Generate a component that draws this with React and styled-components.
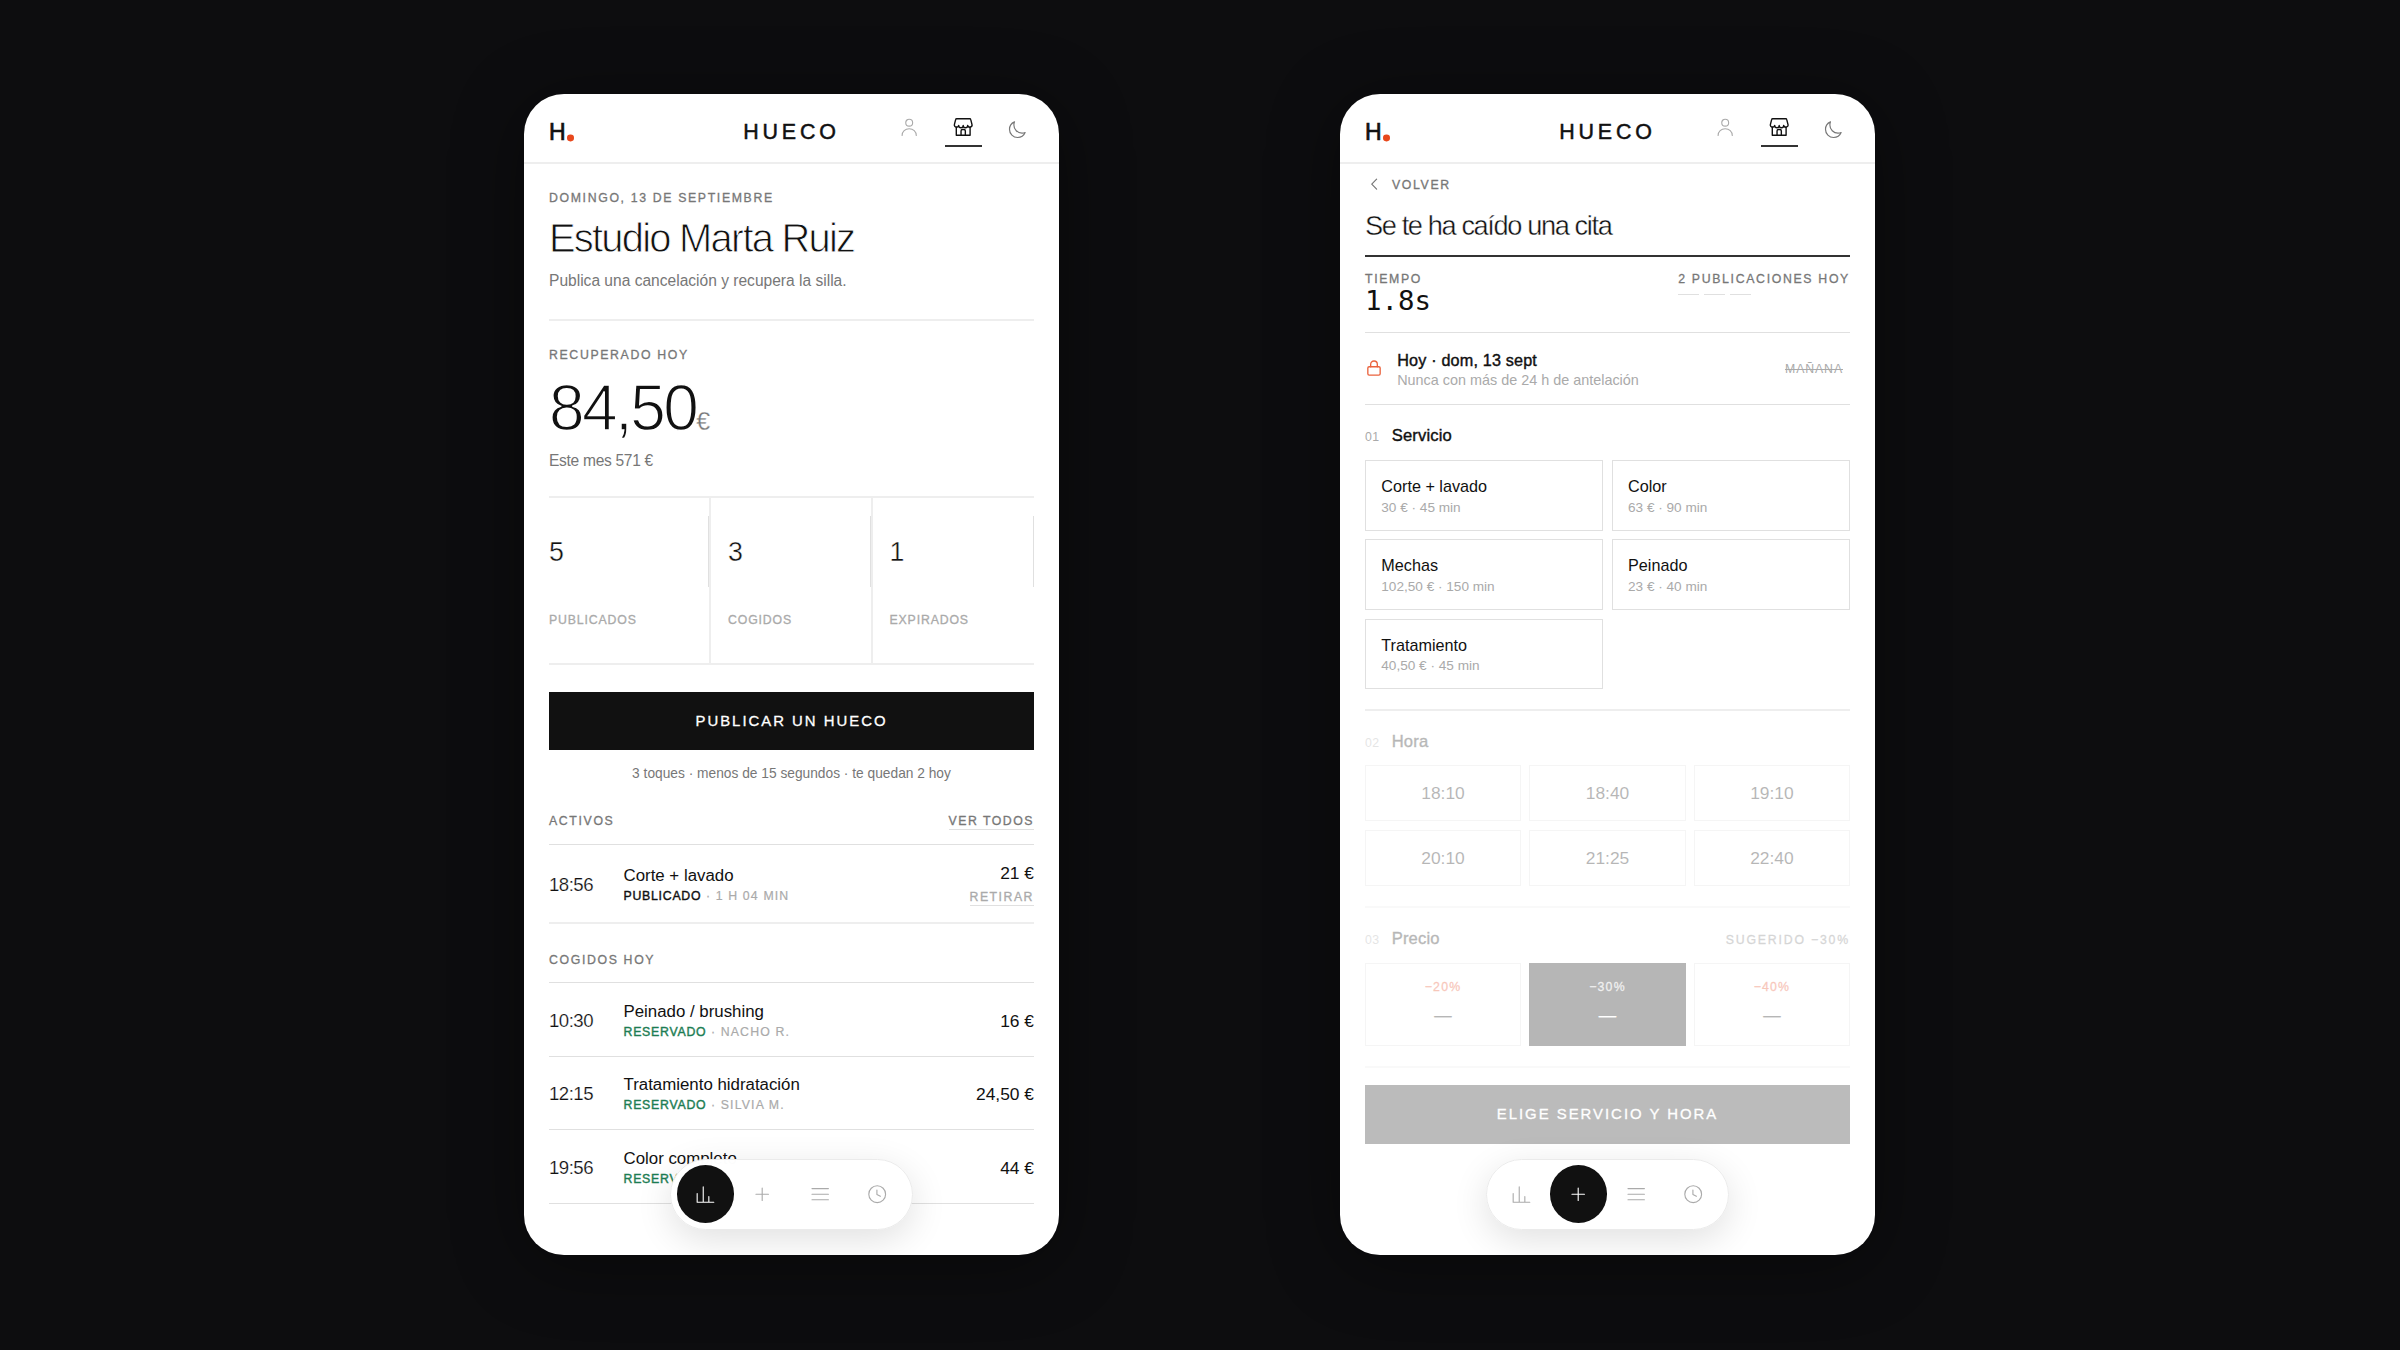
import React from "react";
import styled, { createGlobalStyle, css } from "styled-components";

const ink = "#111111";
const mid = "#777777";
const soft = "#aaaaaa";
const hair = "#e0e0e0";
const line = "#eeeeee";
const accent = "#e8481c";

const GlobalStyle = createGlobalStyle`
  * { box-sizing: border-box; }
  body {
    margin: 0;
    background: #0d0d0f;
    font-family: "Liberation Sans", Arial, sans-serif;
    color: ${ink};
  }
  button { font-family: inherit; }
`;

// the family has no 300 or 500 cut, a stroke trims or thickens the regular one
const light = css`
  -webkit-text-stroke: ${(p) => p.$trim || 0.4}px #fff;
`;
const medium = css`
  -webkit-text-stroke: 0.3px currentColor;
`;

const Stage = styled.main`
  display: flex;
  gap: 281px;
  height: 1350px;
  padding: 94px 0 0 524px;
  overflow: hidden;
`;

const Phone = styled.section`
  position: relative;
  width: 535px;
  height: 1161px;
  flex: none;
  overflow: hidden;
  border-radius: 40px;
  background: #fff;
`;

const Shade = styled.div`
  height: 1161px;
  border-radius: 40px;
  box-shadow: 0 10px 70px rgba(0, 0, 0, 0.4);
`;

const Header = styled.header`
  display: grid;
  grid-template-columns: 1fr auto 1fr;
  align-items: center;
  height: 70px;
  padding: 7px 25px 0;
  border-bottom: 2px solid ${line};
`;

const Logo = styled.div`
  display: flex;
  align-items: baseline;
  font-size: 23px;
  line-height: 26px;
  letter-spacing: 0;
  -webkit-text-stroke: 0.7px currentColor;
`;

const Dot = styled.i`
  width: 6.6px;
  height: 6.6px;
  margin-left: 1.5px;
  border-radius: 50%;
  background: ${accent};
  transform: translateY(1.4px);
`;

const Wordmark = styled.div`
  font-size: 21.4px;
  line-height: 26px;
  letter-spacing: 3.9px;
  -webkit-text-stroke: 0.5px currentColor;
`;

const Tabs = styled.nav`
  display: flex;
  justify-content: flex-end;
  align-items: center;
`;

const Tab = styled.div`
  display: flex;
  flex-direction: column;
  align-items: center;
  width: 37.5px;
  height: 31px;
  margin-right: 17px;
  color: ${(p) => (p.$active ? ink : soft)};
  border-bottom: 2px solid ${(p) => (p.$active ? "#333" : "transparent")};
`;

const Theme = styled.div`
  display: flex;
  justify-content: center;
  width: 35px;
  height: 23px;
  color: ${mid};
`;

const Svg = styled.svg`
  display: block;
  width: 22.4px;
  height: 22.4px;
  flex: none;
  fill: none;
  stroke: currentColor;
  stroke-width: ${(p) => p.$w || 1.2};
  stroke-linecap: round;
  stroke-linejoin: round;

  ${Theme} & { width: 20px; height: 20px; }
`;

const Body = styled.div`
  padding: ${(p) => p.$top}px 25px 0;
`;

const Eyebrow = styled.div`
  font-size: 12.3px;
  line-height: 16px;
  letter-spacing: ${(p) => p.$ls || 1.64}px;
  color: ${(p) => p.$color || mid};
  white-space: nowrap;
  ${medium}
`;

const Title = styled.h1`
  margin: 10px 0 0;
  font-size: 39.9px;
  font-weight: 400;
  line-height: 44px;
  letter-spacing: -1.76px;
  ${light}
`;

const Note = styled.p`
  height: 22px;
  margin: 10.3px 0 0;
  font-size: 15.57px;
  line-height: 22px;
  letter-spacing: ${(p) => p.$ls || 0}px;
  color: ${mid};
`;

const Rule = styled.hr`
  height: 2px;
  margin: 26.7px 0 26px;
  border: 0;
  background: ${line};
`;

const Amount = styled.div`
  height: 64px;
  margin-top: 13.2px;
  font-size: 64px;
  line-height: 64px;
  letter-spacing: -2.6px;
  white-space: nowrap;
  ${light}

  small {
    font-size: 25px;
    line-height: 25px;
    letter-spacing: 0;
    color: ${mid};
    -webkit-text-stroke: 0.3px #fff;
  }
`;

const Stats = styled.div`
  display: grid;
  grid-template-columns: 162px 161.5px 161.5px;
  height: 169px;
  margin-top: 23.5px;
  border-top: 2px solid ${line};
  border-bottom: 2px solid ${line};
`;

const Stat = styled.div`
  padding: 18px 0 0 17px;
  border-right: 2px solid ${line};

  &:first-child { padding-left: 0; }
  &:last-child { border-right: 0; }
`;

const StatValue = styled.div`
  height: 71.5px;
  margin-bottom: 24.3px;
  border-right: 1px solid ${hair};
  font-size: 26.8px;
  line-height: 73.5px;
  ${light}
`;

const Cta = styled.button`
  display: block;
  width: 100%;
  height: 58.4px;
  margin: ${(p) => p.$top}px 0 0;
  padding: 0;
  border: 0;
  background: ${(p) => (p.disabled ? "#bbbbbb" : ink)};
  color: #fff;
  font-size: 14.9px;
  letter-spacing: 2px;
  ${medium}
`;

const Hint = styled.p`
  margin: 14.3px 0 0;
  font-size: 13.75px;
  line-height: 18px;
  color: ${mid};
  text-align: center;
`;

const SectionHead = styled.div`
  display: flex;
  justify-content: space-between;
  margin-top: ${(p) => p.$top}px;
  padding-bottom: 14.3px;
  border-bottom: 1px solid ${hair};

  ${Eyebrow} { line-height: 15px; }
`;

const LinkText = styled(Eyebrow)`
  line-height: 15px;
  border-bottom: 1px solid ${hair};
`;

const Row = styled.div`
  display: flex;
  align-items: center;
  height: ${(p) => (p.$tall ? 79 : 73.5)}px;
  padding-top: 2px;
  border-bottom: ${(p) => (p.$tall ? `2px solid ${line}` : `1px solid ${hair}`)};
`;

const Time = styled.div`
  width: 74.5px;
  font-size: 18.6px;
  line-height: 22px;
  letter-spacing: -0.5px;
  -webkit-text-stroke: 0.2px #fff;
`;

const Info = styled.div`
  flex: 1;
  padding-top: 1.6px;
`;

const Name = styled.div`
  font-size: 16.85px;
  line-height: 22px;
`;

const Meta = styled.div`
  font-size: 12.3px;
  line-height: 19px;
  letter-spacing: 1.15px;
  color: ${soft};
  -webkit-text-stroke: 0.2px currentColor;
`;

const Status = styled.span`
  letter-spacing: 0.75px;
  color: ${(p) => (p.$done ? "#1d7d53" : ink)};
  -webkit-text-stroke: 0.4px currentColor;
`;

const Side = styled.div`
  display: flex;
  flex-direction: column;
  align-items: flex-end;
  gap: 6.7px;
`;

const Price = styled.div`
  font-size: 17.4px;
  line-height: 20px;
`;

const Dock = styled.nav`
  position: absolute;
  left: 146px;
  bottom: 25.5px;
  display: flex;
  width: 242.5px;
  height: 71px;
  padding: 5.5px 5.6px;
  border: 1px solid #ebebeb;
  border-radius: 36px;
  background: rgba(255, 255, 255, 0.99);
  box-shadow: 0 10px 36px rgba(0, 0, 0, 0.12);
`;

const DockItem = styled.div`
  display: flex;
  align-items: center;
  justify-content: center;
  width: 57.3px;
  height: 57.6px;
  border-radius: 50%;
  background: ${(p) => (p.$active ? ink : "transparent")};
  color: ${(p) => (p.$active ? "#fff" : soft)};
`;

const Back = styled.div`
  display: flex;
  align-items: center;
  height: 18px;
  color: ${mid};

  ${Svg} { width: 18px; height: 18px; margin: -1px 9px 0 0; }
`;

const FormTitle = styled.h2`
  height: 48.5px;
  margin: 15px 0 0;
  border-bottom: 2px solid #333;
  font-size: 27.2px;
  font-weight: 400;
  line-height: 34px;
  letter-spacing: -1.38px;
  ${light}
`;

const Meter = styled.div`
  display: flex;
  justify-content: space-between;
  height: 76px;
  padding-top: 14.2px;
  border-bottom: 1px solid ${hair};
`;

const Clock = styled.div`
  font-family: "DejaVu Sans Mono", monospace;
  font-size: 27.4px;
  line-height: 27px;
`;

const Ticks = styled.div`
  display: flex;
  gap: 5.5px;
  margin-top: 7px;

  i { width: 20.5px; height: 1px; background: ${hair}; }
`;

const DayRow = styled.div`
  display: flex;
  align-items: center;
  height: 72px;
  border-bottom: 1px solid ${hair};

  ${Svg} { width: 20px; height: 20px; margin: -2px 13px 0 -0.8px; color: ${accent}; opacity: 0.85; }
`;

const Day = styled.div`
  flex: 1;
  padding-top: 3.8px;

  strong {
    display: block;
    font-size: 16.2px;
    font-weight: 400;
    line-height: 20.6px;
    letter-spacing: 0.17px;
    -webkit-text-stroke: 0.4px currentColor;
  }
  span {
    display: block;
    font-size: 14.4px;
    line-height: 20.9px;
    color: ${soft};
  }
`;

const Tomorrow = styled.s`
  margin-right: 7px;
  font-size: 12.3px;
  letter-spacing: 0.9px;
  color: ${soft};
`;

const Step = styled.section`
  padding: ${(p) => p.$top}px 0 20px;
  border-bottom: 2px solid ${line};
  opacity: ${(p) => (p.$off ? 0.3 : 1)};
`;

const StepHead = styled.div`
  display: flex;
  align-items: baseline;
  height: 20px;
  margin-bottom: 13.9px;
  line-height: 20px;

  b {
    width: 26.7px;
    font-size: 12.3px;
    font-weight: 400;
    letter-spacing: 0.5px;
    color: ${soft};
  }
  h3 {
    flex: 1;
    margin: 0;
    font-size: 16.6px;
    font-weight: 400;
    letter-spacing: 0.15px;
    -webkit-text-stroke: 0.4px currentColor;
  }
`;

const Grid = styled.div`
  display: grid;
  grid-template-columns: repeat(${(p) => p.$cols}, 1fr);
  gap: 8.8px 8.4px;
`;

const Service = styled.div`
  height: 70.4px;
  padding: 15px 0 0 15.3px;
  border: 1px solid ${hair};
  font-size: 16.2px;
  line-height: 20px;

  span {
    display: block;
    margin-top: 2.7px;
    font-size: 13.6px;
    line-height: 18px;
    color: ${soft};
  }
`;

const Slot = styled.div`
  height: 56px;
  border: 1px solid ${hair};
  font-size: 17.4px;
  line-height: 54px;
  text-align: center;
`;

const Discount = styled.div`
  height: 83.7px;
  padding-top: 15.8px;
  border: 1px solid ${(p) => (p.$active ? ink : hair)};
  background: ${(p) => (p.$active ? ink : "transparent")};
  color: ${(p) => (p.$active ? "#fff" : ink)};
  font-size: 17.4px;
  line-height: 22px;
  text-align: center;
  -webkit-text-stroke: 0.3px currentColor;

  ${Eyebrow} {
    margin-bottom: 8.4px;
    color: ${(p) => (p.$active ? "#cfcfcf" : accent)};
  }
`;

const UserIcon = () => (
  <Svg viewBox="0 0 24 24">
    <circle cx="12" cy="7.2" r="3.7" />
    <path d="M4.4 20.9c0-4.2 3.3-7.2 7.6-7.2s7.6 3 7.6 7.2" />
  </Svg>
);

const StoreIcon = () => (
  <Svg viewBox="0 0 24 24" $w={1.5}>
    <path d="M5 3h14q.9 0 1.1.9L21.4 9a2.3 2.3 0 0 1-4.6 1.2 2.4 2.4 0 0 1-4.8 0 2.4 2.4 0 0 1-4.8 0A2.3 2.3 0 0 1 2.6 9l1.3-5.1Q4.1 3 5 3z" />
    <path d="M4.6 11.8v8.9h14.8v-8.9" />
    <path d="M9.7 20.7v-4.6q0-1.6 1.5-1.6h1.6q1.5 0 1.5 1.6v4.6" />
  </Svg>
);

const MoonIcon = () => (
  <Svg viewBox="0 0 24 24" $w={1.4}>
    <path d="M21.752 15.002A9.718 9.718 0 0 1 18 15.75 9.75 9.75 0 0 1 8.25 6c0-1.33.266-2.597.748-3.752A9.753 9.753 0 0 0 3 11.25 9.75 9.75 0 0 0 12.75 21a9.753 9.753 0 0 0 9.002-5.998z" />
  </Svg>
);

const BarsIcon = () => (
  <Svg viewBox="0 0 24 24">
    <path d="M3.4 11.3v9.3h17.8M9.9 4.2v16.4M15.9 14.5v6.1" />
  </Svg>
);

const PlusIcon = () => (
  <Svg viewBox="0 0 24 24">
    <path d="M12 5.3v13.4M5.3 12h13.4" />
  </Svg>
);

const ListIcon = () => (
  <Svg viewBox="0 0 24 24">
    <path d="M3.2 6h17.6M3.2 12h17.6M3.2 18h17.6" />
  </Svg>
);

const ClockIcon = () => (
  <Svg viewBox="0 0 24 24">
    <circle cx="12" cy="12" r="9" />
    <path d="M11.7 7.6v4.8l3.7 1.9" />
  </Svg>
);

const ChevronIcon = () => (
  <Svg viewBox="0 0 24 24" $w={1.6}>
    <path d="M15.5 5.5 9 12.2l6.5 6.7" />
  </Svg>
);

const LockIcon = () => (
  <Svg viewBox="0 0 24 24" $w={1.6}>
    <rect x="4.6" y="10.5" width="14.8" height="10" rx="1.6" />
    <path d="M8 10.5V7.6a4 4 0 0 1 8 0v2.9" />
  </Svg>
);

const dockIcons = [BarsIcon, PlusIcon, ListIcon, ClockIcon];

function Shell({ dock, children }) {
  return (
    <Shade>
      <Phone>
        <Header>
          <Logo>H<Dot /></Logo>
          <Wordmark>HUECO</Wordmark>
          <Tabs>
            <Tab><UserIcon /></Tab>
            <Tab $active><StoreIcon /></Tab>
            <Theme><MoonIcon /></Theme>
          </Tabs>
        </Header>
        {children}
        <Dock>
          {dockIcons.map((Icon, i) => (
            <DockItem key={i} $active={i === dock}><Icon /></DockItem>
          ))}
        </Dock>
      </Phone>
    </Shade>
  );
}

const stats = [
  ["5", "PUBLICADOS"],
  ["3", "COGIDOS"],
  ["1", "EXPIRADOS"],
];

const taken = [
  { time: "10:30", name: "Peinado / brushing", who: "NACHO R.", price: "16 €" },
  { time: "12:15", name: "Tratamiento hidratación", who: "SILVIA M.", price: "24,50 €" },
  { time: "19:56", name: "Color completo", price: "44 €" },
];

const services = [
  ["Corte + lavado", "30 € · 45 min"],
  ["Color", "63 € · 90 min"],
  ["Mechas", "102,50 € · 150 min"],
  ["Peinado", "23 € · 40 min"],
  ["Tratamiento", "40,50 € · 45 min"],
];

const slots = ["18:10", "18:40", "19:10", "20:10", "21:25", "22:40"];
const discounts = ["−20%", "−30%", "−40%"];

function Dashboard() {
  return (
    <Shell dock={0}>
      <Body $top={26}>
        <Eyebrow>DOMINGO, 13 DE SEPTIEMBRE</Eyebrow>
        <Title $trim={0.9}>Estudio Marta Ruiz</Title>
        <Note>Publica una cancelación y recupera la silla.</Note>
        <Rule />
        <Eyebrow>RECUPERADO HOY</Eyebrow>
        <Amount $trim={1.5}>84,50<small>€</small></Amount>
        <Note $ls={-0.3}>Este mes 571 €</Note>
        <Stats>
          {stats.map(([value, label]) => (
            <Stat key={label}>
              <StatValue>{value}</StatValue>
              <Eyebrow $color={soft} $ls={0.85}>{label}</Eyebrow>
            </Stat>
          ))}
        </Stats>
        <Cta $top={27}>PUBLICAR UN HUECO</Cta>
        <Hint>3 toques · menos de 15 segundos · te quedan 2 hoy</Hint>

        <SectionHead $top={31.1}>
          <Eyebrow>ACTIVOS</Eyebrow>
          <LinkText $ls={1.5}>VER TODOS</LinkText>
        </SectionHead>
        <Row $tall>
          <Time>18:56</Time>
          <Info>
            <Name>Corte + lavado</Name>
            <Meta><Status>PUBLICADO</Status> · 1 H 04 MIN</Meta>
          </Info>
          <Side>
            <Price>21 €</Price>
            <LinkText $color={soft} $ls={1.5}>RETIRAR</LinkText>
          </Side>
        </Row>

        <SectionHead $top={29}>
          <Eyebrow>COGIDOS HOY</Eyebrow>
        </SectionHead>
        {taken.map((t) => (
          <Row key={t.time}>
            <Time>{t.time}</Time>
            <Info>
              <Name>{t.name}</Name>
              <Meta><Status $done>RESERVADO</Status>{t.who && ` · ${t.who}`}</Meta>
            </Info>
            <Price>{t.price}</Price>
          </Row>
        ))}
      </Body>
    </Shell>
  );
}

function Publish() {
  return (
    <Shell dock={1}>
      <Body $top={11.5}>
        <Back>
          <ChevronIcon />
          <Eyebrow>VOLVER</Eyebrow>
        </Back>
        <FormTitle>Se te ha caído una cita</FormTitle>
        <Meter>
          <div>
            <Eyebrow>TIEMPO</Eyebrow>
            <Clock>1.8s</Clock>
          </div>
          <div>
            <Eyebrow $ls={1.67}>2 PUBLICACIONES HOY</Eyebrow>
            <Ticks><i /><i /><i /></Ticks>
          </div>
        </Meter>
        <DayRow>
          <LockIcon />
          <Day>
            <strong>Hoy · dom, 13 sept</strong>
            <span>Nunca con más de 24 h de antelación</span>
          </Day>
          <Tomorrow>MAÑANA</Tomorrow>
        </DayRow>

        <Step $top={21.4}>
          <StepHead><b>01</b><h3>Servicio</h3></StepHead>
          <Grid $cols={2}>
            {services.map(([name, meta]) => (
              <Service key={name}>{name}<span>{meta}</span></Service>
            ))}
          </Grid>
        </Step>
        <Step $top={20.5} $off>
          <StepHead><b>02</b><h3>Hora</h3></StepHead>
          <Grid $cols={3}>
            {slots.map((s) => <Slot key={s}>{s}</Slot>)}
          </Grid>
        </Step>
        <Step $top={20.4} $off>
          <StepHead>
            <b>03</b>
            <h3>Precio</h3>
            <Eyebrow $ls={1.8}>SUGERIDO −30%</Eyebrow>
          </StepHead>
          <Grid $cols={3}>
            {discounts.map((d, i) => (
              <Discount key={d} $active={i === 1}>
                <Eyebrow $ls={1.2}>{d}</Eyebrow>
                —
              </Discount>
            ))}
          </Grid>
        </Step>
        <Cta $top={17} disabled>ELIGE SERVICIO Y HORA</Cta>
      </Body>
    </Shell>
  );
}

export default function App() {
  return (
    <>
      <GlobalStyle />
      <Stage>
        <Dashboard />
        <Publish />
      </Stage>
    </>
  );
}
